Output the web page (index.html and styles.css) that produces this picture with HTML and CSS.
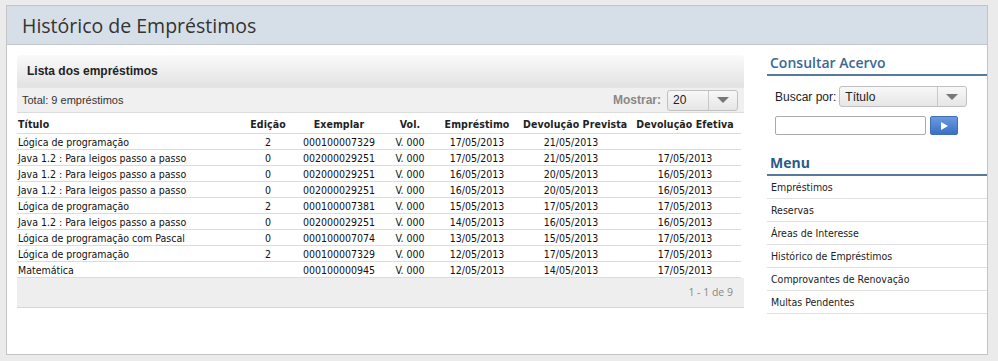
FILE: index.html
```html
<!DOCTYPE html>
<html lang="pt">

<head>
    <meta charset="UTF-8">
    <title>Histórico de Empréstimos</title>
    <link rel="stylesheet" href="styles.css">
</head>

<body>
    <div class="page">
        <div class="page-header">
            <h1>Histórico de Empréstimos</h1>
        </div>

        <div class="page-body">
            <div class="panel">
                <div class="panel-title">Lista dos empréstimos</div>
                <div class="toolbar">
                    <span class="total">Total: 9 empréstimos</span>
                    <span class="show">
                        <label>Mostrar:</label>
                        <span class="select small">
                            <span class="select-value">20</span>
                            <span class="select-arrow"></span>
                        </span>
                    </span>
                </div>

                <table class="loans">
                    <colgroup>
                        <col style="width: 230px">
                        <col style="width: 42px">
                        <col style="width: 100px">
                        <col style="width: 42px">
                        <col style="width: 92px">
                        <col style="width: 96px">
                        <col>
                    </colgroup>
                    <thead>
                        <tr>
                            <th class="left">Título</th>
                            <th>Edição</th>
                            <th>Exemplar</th>
                            <th>Vol.</th>
                            <th>Empréstimo</th>
                            <th>Devolução Prevista</th>
                            <th class="last">Devolução Efetiva</th>
                        </tr>
                    </thead>
                    <tbody id="loans"></tbody>
                </table>

                <div class="pager">1 - 1 de 9</div>
            </div>

            <div class="sidebar">
                <h2>Consultar Acervo</h2>
                <div class="search">
                    <div class="search-by">
                        <label>Buscar por:</label>
                        <span class="select wide">
                            <span class="select-value">Título</span>
                            <span class="select-arrow"></span>
                        </span>
                    </div>
                    <div class="search-field">
                        <input type="text">
                        <button class="go">
                            <svg width="9" height="8" viewBox="0 0 9 8"><path d="M1 0 L8 4 L1 8 Z" fill="#fff"/></svg>
                        </button>
                    </div>
                </div>

                <h2 class="menu-title">Menu</h2>
                <ul class="menu">
                    <li>Empréstimos</li>
                    <li>Reservas</li>
                    <li>Áreas de Interesse</li>
                    <li>Histórico de Empréstimos</li>
                    <li>Comprovantes de Renovação</li>
                    <li>Multas Pendentes</li>
                </ul>
            </div>
        </div>
    </div>

    <script>
        const loans = [
            ['Lógica de programação', '2', '000100007329', 'V. 000', '17/05/2013', '21/05/2013', ''],
            ['Java 1.2 : Para leigos passo a passo', '0', '002000029251', 'V. 000', '17/05/2013', '21/05/2013', '17/05/2013'],
            ['Java 1.2 : Para leigos passo a passo', '0', '002000029251', 'V. 000', '16/05/2013', '20/05/2013', '16/05/2013'],
            ['Java 1.2 : Para leigos passo a passo', '0', '002000029251', 'V. 000', '16/05/2013', '20/05/2013', '16/05/2013'],
            ['Lógica de programação', '2', '000100007381', 'V. 000', '15/05/2013', '17/05/2013', '17/05/2013'],
            ['Java 1.2 : Para leigos passo a passo', '0', '002000029251', 'V. 000', '14/05/2013', '16/05/2013', '16/05/2013'],
            ['Lógica de programação com Pascal', '0', '000100007074', 'V. 000', '13/05/2013', '15/05/2013', '17/05/2013'],
            ['Lógica de programação', '2', '000100007329', 'V. 000', '12/05/2013', '17/05/2013', '17/05/2013'],
            ['Matemática', '', '000100000945', 'V. 000', '12/05/2013', '14/05/2013', '17/05/2013']
        ];

        const loansTable = document.getElementById('loans');

        loans.forEach(loan => {
            const row = document.createElement('tr');
            row.innerHTML = `
        <td class="left">${loan[0]}</td>
        <td>${loan[1]}</td>
        <td>${loan[2]}</td>
        <td>${loan[3]}</td>
        <td>${loan[4]}</td>
        <td>${loan[5]}</td>
        <td class="last">${loan[6]}</td>
        `;
            loansTable.appendChild(row);
        });
    </script>
</body>

</html>
```

FILE: styles.css
```css
body {
    margin: 0;
    padding: 5px 0 0 6px;
    background-color: #ebebeb;
    font-family: "Liberation Sans", Arial, sans-serif;
    color: #222;
}

.page {
    width: 980px;
    height: 348px;
    background-color: #fff;
    border: 1px solid #c4c4c4;
}

.page-header {
    height: 38px;
    background-color: #d6dfe7;
    border-bottom: 1px solid #c2c8cd;
    display: flex;
    align-items: center;
}

h1 {
    margin: 0 0 0 15px;
    font-family: "Open Sans", sans-serif;
    font-weight: normal;
    font-size: 19.5px;
    color: #333;
}

.page-body {
    display: flex;
    padding: 10px 0 0 10px;
    gap: 23px;
}

/* lista */

.panel {
    width: 727px;
}

.panel-title {
    height: 32px;
    line-height: 32px;
    padding-left: 10px;
    border-radius: 4px 4px 0 0;
    background: linear-gradient(#fafafa, #e2e2e2);
    font-weight: bold;
    font-size: 12px;
    color: #222;
}

.toolbar {
    height: 24px;
    background-color: #f0f0f0;
    border-bottom: 1px solid #dcdcdc;
    border-top: 1px solid #e4e4e4;
    display: flex;
    align-items: center;
    justify-content: space-between;
    padding: 0 6px 0 5px;
    font-size: 11px;
    color: #333;
}

.show {
    display: flex;
    align-items: center;
    gap: 6px;
}

.show label {
    font-weight: bold;
    font-size: 12px;
    color: #888;
}

.select {
    display: flex;
    align-items: center;
    height: 19px;
    border: 1px solid #c0c0c0;
    border-radius: 3px;
    background: linear-gradient(#f8f8f8, #e6e6e6);
    font-size: 12px;
    color: #222;
}

.select-value {
    flex: 1;
    padding-left: 5px;
}

.select-arrow {
    width: 28px;
    height: 100%;
    border-left: 1px solid #c8c8c8;
    display: flex;
    align-items: center;
    justify-content: center;
}

.select-arrow::after {
    content: "";
    border-left: 6px solid transparent;
    border-right: 6px solid transparent;
    border-top: 6px solid #777;
}

.select.small {
    width: 69px;
}

.select.wide {
    width: 126px;
}

table.loans {
    width: 724px;
    border-collapse: collapse;
    table-layout: fixed;
    font-family: "DejaVu Sans Condensed", "DejaVu Sans", sans-serif;
    font-size: 10.5px;
    margin-top: 2px;
}

.loans th {
    height: 18px;
    font-weight: bold;
    text-align: center;
    padding: 0;
    border-bottom: 1px solid #dcdcdc;
    white-space: nowrap;
    letter-spacing: 0.1px;
}

.loans td {
    height: 15px;
    padding: 0;
    text-align: center;
    border-bottom: 1px solid #dcdcdc;
    white-space: nowrap;
    color: #111;
}

.loans .left {
    text-align: left;
    padding-left: 1px;
}

.loans .last {
    padding-left: 10px;
}

.pager {
    height: 29px;
    line-height: 29px;
    background-color: #eeeeee;
    border-bottom: 1px solid #d8d8d8;
    text-align: right;
    padding-right: 11px;
    font-family: "Open Sans", sans-serif;
    font-size: 10.5px;
    color: #888;
}

/* lateral */

.sidebar {
    width: 220px;
}

.sidebar h2 {
    margin: 0;
    padding: 0 0 2px 3px;
    height: 17px;
    line-height: 15px;
    font-family: "Open Sans", sans-serif;
    font-weight: 600;
    font-size: 14px;
    color: #3a6894;
    border-bottom: 2px solid #587a9a;
}

.search {
    padding: 10px 0 0 8px;
    height: 69px;
    font-size: 12px;
}

.search-by {
    display: flex;
    align-items: center;
    gap: 3px;
}

.search-by label {
    color: #222;
}

.search-field {
    display: flex;
    gap: 4px;
    margin-top: 9px;
}

.search-field input {
    width: 147px;
    height: 15px;
    border: 1px solid #aaa;
    border-radius: 2px;
    padding: 1px;
    margin: 0;
}

.go {
    width: 28px;
    height: 19px;
    border: 1px solid #3f6fb5;
    border-radius: 2px;
    background: linear-gradient(#6a9ae0, #3a70c6);
    padding: 0;
    display: flex;
    align-items: center;
    justify-content: center;
}

.sidebar .menu-title {
    color: #2b5b8a;
    font-weight: bold;
}

.menu {
    list-style: none;
    margin: 0;
    padding: 0;
}

.menu li {
    height: 22px;
    line-height: 22px;
    padding-left: 4px;
    border-bottom: 1px solid #e0e0e0;
    font-family: "DejaVu Sans Condensed", "DejaVu Sans", sans-serif;
    font-size: 10.5px;
    color: #222;
}
```
